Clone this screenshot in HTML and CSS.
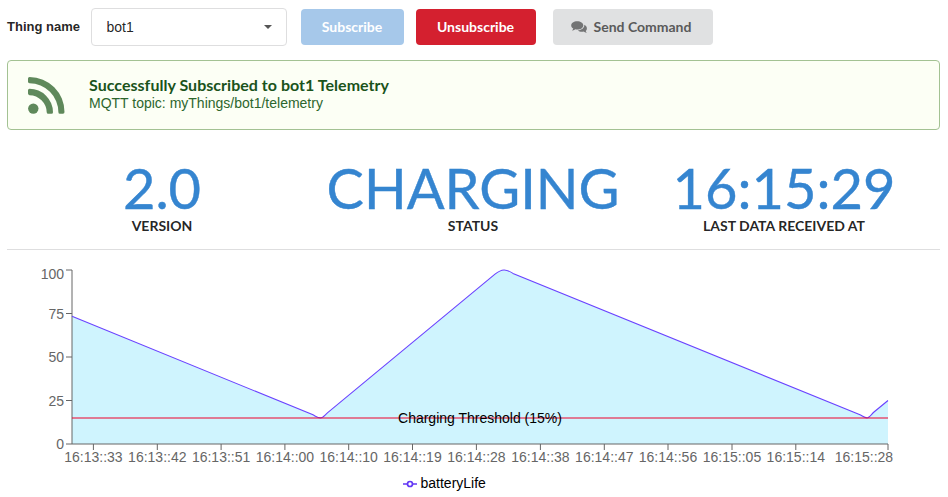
FILE: index.html
```
<!DOCTYPE html>
<html lang="en">
<head>
<meta charset="utf-8">
<title>Thing Telemetry</title>
<link rel="stylesheet" href="styles.css">
</head>
<body>
<form class="toolbar">
  <label class="field-label">Thing name</label>
  <div class="dropdown"><span>bot1</span><span class="caret"></span></div>
  <button type="button" class="button primary">Subscribe</button>
  <button type="button" class="button negative">Unsubscribe</button>
  <button type="button" class="button command">
    <svg class="comments" viewBox="0 0 16 14"><path d="M6.200 1.200C2.800 1.200.2 3 .2 5.400c0 1.300.8 2.400 2.100 3.200-.2.800-.7 1.400-1.200 2 1.300-.1 2.400-.7 3.200-1.300.6.1 1.200.2 1.900.2 3.400 0 6.100-1.800 6.100-4.100S9.600 1.200 6.200 1.200z"/><path d="M13.300 4.800c.3 3.100-2.700 5.500-6.500 5.600 1 .9 2.500 1.400 4.100 1.400.6 0 1.100-.1 1.600-.2.9.7 2 1.200 3.300 1.300-.5-.5-.9-1.100-1.100-1.900.8-.6 1.200-1.500 1.200-2.500 0-1.600-1-2.900-2.600-3.700z"/></svg>
    Send Command
  </button>
</form>
<section class="message">
  <svg class="rss" viewBox="0 0 37 37"><circle cx="5.300" cy="31.600" r="5.200"/><path d="M1.500 0A35 35 0 0 1 36.500 35q0 1.700-1.500 1.700h-3.100q-1.500 0-1.500-1.500A29 29 0 0 0 1.500 6.300Q0 6.200 0 4.800V1.500Q0 0 1.500 0z"/><path d="M1.500 11.800A23.600 23.600 0 0 1 25 35.200q0 1.500-1.500 1.500h-3.300q-1.400 0-1.500-1.500A17.500 17.500 0 0 0 1.500 18.200Q0 18 0 16.600V13.300Q0 11.800 1.500 11.800z"/></svg>
  <div>
    <div class="message-title">Successfully Subscribed to bot1 Telemetry</div>
    <p>MQTT topic: myThings/bot1/telemetry</p>
  </div>
</section>
<section class="statistics">
  <div class="statistic"><div class="value">2.0</div><div class="label">VERSION</div></div>
  <div class="statistic"><div class="value">CHARGING</div><div class="label">STATUS</div></div>
  <div class="statistic"><div class="value">16:15:29</div><div class="label">LAST DATA RECEIVED AT</div></div>
</section>
<svg class="chart" viewBox="0 250 948 247" width="948" height="247">
  <path class="area" d="M72 316.300L313 414.800C317 417 318 417.900 320.500 417.900C323 417.900 325 414.800 328 412.400L495 274.200C502 268.600 506 268.800 513 273.400L860 414.800C864 417 865 417.900 867 417.900C869 417.900 871 414.800 874 412L888 400.500V444H72Z"/>
  <g class="axis">
    <path d="M72 270V444M66 270H72M66 313.500H72M66 357H72M66 400.500H72M66 444H888"/>
    <path d="M93.400 444v6M157.300 444v6M221.100 444v6M284.900 444v6M348.700 444v6M412.500 444v6M476.400 444v6M540.400 444v6M604.300 444v6M668 444v6M732 444v6M795.800 444v6M888 444v6"/>
  </g>
  <path class="line" d="M72 316.300L313 414.800C317 417 318 417.900 320.500 417.900C323 417.900 325 414.800 328 412.400L495 274.200C502 268.600 506 268.800 513 273.400L860 414.800C864 417 865 417.900 867 417.900C869 417.900 871 414.800 874 412L888 400.500"/>
  <path class="threshold" d="M72 418H888"/>
  <g class="ticks y-ticks">
    <text x="64" y="279">100</text><text x="64" y="318.500">75</text><text x="64" y="362">50</text><text x="64" y="405.500">25</text><text x="64" y="449">0</text>
  </g>
  <g class="ticks x-ticks">
    <text x="93.400" y="462">16:13::33</text><text x="157.300" y="462">16:13::42</text><text x="221.100" y="462">16:13::51</text><text x="284.900" y="462">16:14::00</text><text x="348.700" y="462">16:14::10</text><text x="412.500" y="462">16:14::19</text><text x="476.400" y="462">16:14::28</text><text x="540.400" y="462">16:14::38</text><text x="604.300" y="462">16:14::47</text><text x="668" y="462">16:14::56</text><text x="732" y="462">16:15::05</text><text x="795.800" y="462">16:15::14</text><text x="863.900" y="462">16:15::28</text>
  </g>
  <text class="threshold-label" x="480" y="423">Charging Threshold (15%)</text>
  <g class="legend"><path d="M403 484h4.500M412.500 484h4.500"/><circle cx="410" cy="484" r="2.500"/><text x="420.500" y="488">batteryLife</text></g>
</svg>
</body>
</html>
```
FILE: styles.css
```
* { box-sizing: border-box; }
body {
  margin: 0;
  background: #fff;
  color: rgba(0, 0, 0, .87);
  font: 14px/20px "Liberation Sans", Arial, sans-serif;
  overflow: hidden;
}
.toolbar { display: flex; align-items: center; height: 37px; margin: 8px 8px 15px 7px; }
.field-label { width: 84px; padding-top: 1px; font-size: 13px; font-weight: 700; white-space: nowrap; }
.dropdown {
  display: flex;
  align-items: center;
  justify-content: space-between;
  width: 196px;
  height: 38px;
  padding: 0 14px 0 14.500px;
  border: 1px solid #dededf;
  border-radius: 4px;
}
.caret { border: 4px solid transparent; border-top-color: #555; border-bottom: 0; }
.button {
  display: flex;
  align-items: center;
  justify-content: center;
  height: 36px;
  padding: 0;
  border: 0;
  border-radius: 4px;
  color: #fff;
  font: 700 14px/14px Lato, sans-serif;
}
.primary { width: 103px; margin-left: 14px; padding-right: 1px; background: #a6c8ea; }
.negative { width: 120px; margin-left: 12px; padding-right: 1px; background: #d4202f; }
.command { width: 160px; margin-left: 17px; padding-right: 4px; background: #e0e1e2; color: #5a5a5a; }
.comments { width: 16px; height: 14px; margin-right: 7px; fill: #737475; }
.message {
  display: flex;
  align-items: center;
  width: 933px;
  height: 70px;
  margin-left: 7px;
  padding-left: 20px;
  border: 1px solid #a3c293;
  border-radius: 4px;
  background: #fcfff5;
  color: #2c662d;
}
.rss { width: 37px; height: 37px; margin-right: 24px; fill: #5f895b; }
.message-title { color: #1a531b; font: 700 16px/18px Lato, sans-serif; letter-spacing: .03px; }
.message > div { padding-bottom: 2px; }
.message p { margin: 0; line-height: 18px; }
.statistics {
  display: grid;
  grid-template-columns: 311px 311px 311px;
  width: 933px;
  height: 120px;
  margin-left: 7px;
  padding-top: 30px;
  border-bottom: 1px solid #dededf;
}
.statistic { text-align: center; font-family: Lato, sans-serif; white-space: nowrap; }
.value { height: 57px; color: #3585d0; font-size: 56px; line-height: 56px; padding-right: 1px; -webkit-text-stroke: .4px #3585d0; }
.label { padding-right: 1px; font-size: 14px; font-weight: 700; line-height: 18px; }
.chart { display: block; font-family: "Liberation Sans", Arial, sans-serif; font-size: 14px; }
.area { fill: #cff4fe; }
.line { fill: none; stroke: #6a42ff; stroke-width: 1.100; }
.axis { fill: none; stroke: #666; }
.threshold { stroke: #f0002b; stroke-width: 1.200; }
.ticks { fill: #666; }
.y-ticks { text-anchor: end; }
.x-ticks, .threshold-label { text-anchor: middle; }
.legend path, .legend circle { fill: none; stroke: #6236f5; stroke-width: 1.700; }
```
